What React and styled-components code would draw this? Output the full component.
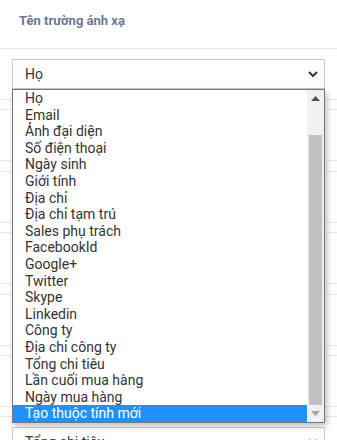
import { createGlobalStyle, styled } from 'styled-components';

const GlobalStyle = createGlobalStyle`
    html, body {
        margin: 0;
        padding: 0;
        background: #fff;
        font-family: Roboto, "Liberation Sans", Arial, sans-serif;
    }
`;

const rows = ['Họ', 'Email', 'Ảnh đại diện', 'Số điện thoại', 'Ngày sinh', 'Giới tính', 'Tổng chi tiêu'];

const options = [
    'Họ', 'Email', 'Ảnh đại diện', 'Số điện thoại', 'Ngày sinh', 'Giới tính',
    'Địa chỉ', 'Địa chỉ tạm trú', 'Sales phụ trách', 'FacebookId', 'Google+',
    'Twitter', 'Skype', 'Linkedin', 'Công ty', 'Địa chỉ công ty', 'Tổng chi tiêu',
    'Lần cuối mua hàng', 'Ngày mua hàng', 'Tạo thuộc tính mới',
];

const Chevron = () => (
    <svg width="10" height="7" viewBox="0 0 10 7">
        <polyline points="1,1 5,5 9,1" fill="none" stroke="#3c3c3c" strokeWidth="2.2" />
    </svg>
);

const Arrow = ({ down, color }) => (
    <svg width="9" height="5" viewBox="0 0 9 5">
        <polygon points={down ? '0,0 9,0 4.5,5' : '0,5 9,5 4.5,0'} fill={color} />
    </svg>
);

const App = () => {
    const selected = options.length - 1;
    return (
        <>
            <GlobalStyle />
            <StyledPage>
                <Header>Tên trường ánh xạ</Header>
                <Rows>
                    {rows.map((r, idx) => (
                        <Row key={idx} $first={idx === 0}>
                            <Select>
                                <span>{r}</span>
                                <Chevron />
                            </Select>
                        </Row>
                    ))}
                </Rows>
                <Dropdown>
                    <OptionList>
                        {options.map((o, idx) => (
                            <Option key={idx} $active={idx === selected}>{o}</Option>
                        ))}
                    </OptionList>
                    <ScrollTrack>
                        <ScrollButton><Arrow color="#505050" /></ScrollButton>
                        <ScrollThumb />
                        <ScrollButton><Arrow down color="#a3a3a3" /></ScrollButton>
                    </ScrollTrack>
                </Dropdown>
            </StyledPage>
        </>
    );
}

const StyledPage = styled.div`
    position: relative;
    width: 337px;
    height: 440px;
    overflow: hidden;
    background: #fff;
`

const Header = styled.div`
    height: 49px;
    box-sizing: border-box;
    padding: 13px 0 0 19px;
    border-bottom: 1px solid #e8e8e8;

    color: #6b7a90;
    font-size: 13px;
    font-weight: bold;
`

const Rows = styled.div`
    display: flex;
    flex-direction: column;
    gap: 9.4px;
`

const Row = styled.div`
    padding: 10px 12px;
    border-top: ${p => p.$first ? 'none' : '1px solid #e8e8e8'};
    border-bottom: 1px solid #e8e8e8;
`

const Select = styled.div`
    height: 30px;
    box-sizing: border-box;
    border: 1px solid #c9c9c9;
    padding: 0 6px 0 12px;
    display: flex;
    align-items: center;
    justify-content: space-between;

    color: #333;
    font-size: 14px;
`

const Dropdown = styled.div`
    position: absolute;
    top: 89px;
    left: 12px;
    width: 313px;
    box-sizing: border-box;
    border: 1px solid #767676;
    background: #fff;
    display: flex;
    box-shadow: 2px 3px 6px rgba(0, 0, 0, 0.25);
`

const OptionList = styled.div`
    flex: 1;
    display: flex;
    flex-direction: column;
`

const Option = styled.div`
    height: 16.6px;
    line-height: 16.6px;
    padding-left: 12px;
    white-space: nowrap;

    font-size: 14px;
    color: ${p => p.$active ? '#fff' : '#333'};
    background: ${p => p.$active ? '#1e90ff' : 'transparent'};
`

const ScrollTrack = styled.div`
    width: 17px;
    background: #f1f1f1;
    display: flex;
    flex-direction: column;
`

const ScrollButton = styled.div`
    height: 17px;
    display: flex;
    align-items: center;
    justify-content: center;
`

const ScrollThumb = styled.div`
    margin: 28px 2px 0 2px;
    flex: 1;
    background: #c1c1c1;
`

export default App;
